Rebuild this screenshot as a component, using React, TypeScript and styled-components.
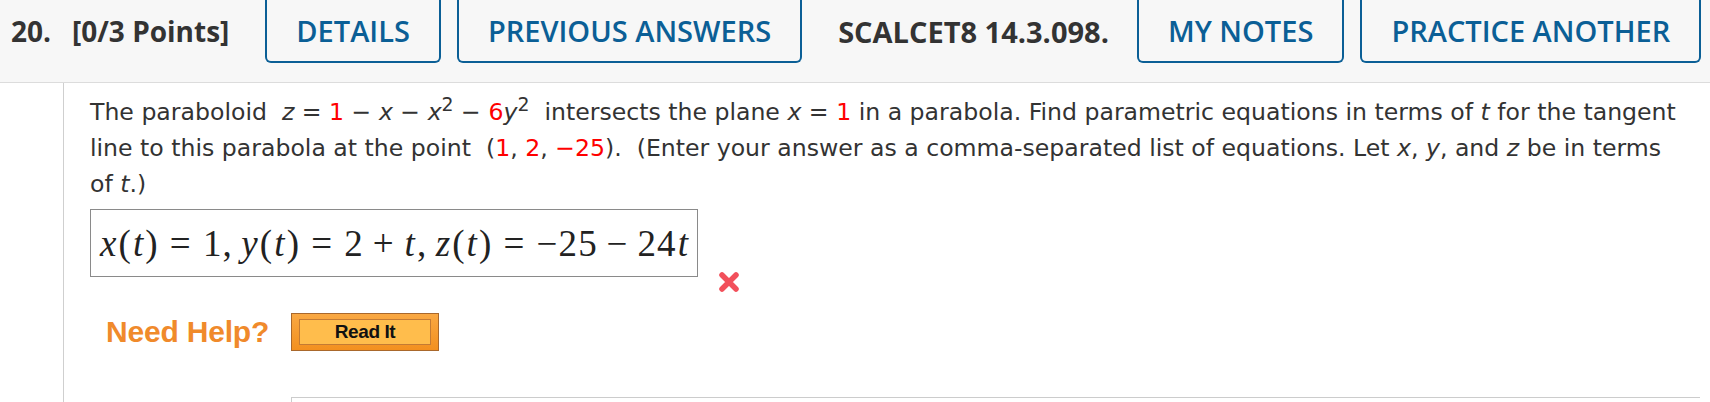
import React from 'react'
import styled, { createGlobalStyle } from 'styled-components'

const GlobalStyle = createGlobalStyle`
    html, body {
        margin: 0;
        padding: 0;
        background: #ffffff;
    }
    body {
        font-family: "Open Sans", "DejaVu Sans", sans-serif;
    }
`

const App: React.FC = () => {
    return (
        <StyledPage>
            <GlobalStyle />
            <StyledHeader>
                <StyledNumber>20.</StyledNumber>
                <StyledPoints>[0/3 Points]</StyledPoints>
                <StyledActions>
                    <StyledTabButton>DETAILS</StyledTabButton>
                    <StyledTabButton>PREVIOUS ANSWERS</StyledTabButton>
                    <StyledLabel>SCALCET8 14.3.098.</StyledLabel>
                    <StyledTabButton>MY NOTES</StyledTabButton>
                    <StyledTabButton>PRACTICE ANOTHER</StyledTabButton>
                </StyledActions>
            </StyledHeader>
            <StyledBody>
                <StyledPrompt>
                    The paraboloid&nbsp; <StyledVar>z</StyledVar> = <StyledRed>1</StyledRed> − <StyledVar>x</StyledVar> − <StyledVar>x</StyledVar><StyledSup>2</StyledSup> − <StyledRed>6</StyledRed><StyledVar>y</StyledVar><StyledSup>2</StyledSup>&nbsp; intersects the plane <StyledVar>x</StyledVar> = <StyledRed>1</StyledRed> in a parabola. Find parametric equations in terms of <StyledVar>t</StyledVar> for the tangent<br />
                    line to this parabola at the point&nbsp; (<StyledRed>1</StyledRed>, <StyledRed>2</StyledRed>, <StyledRed>−25</StyledRed>).&nbsp; (Enter your answer as a comma-separated list of equations. Let <StyledVar>x</StyledVar>, <StyledVar>y</StyledVar>, and <StyledVar>z</StyledVar> be in terms<br />
                    of <StyledVar>t</StyledVar>.)
                </StyledPrompt>
                <StyledAnswerRow>
                    <StyledAnswerBox>
                        <StyledMath>
                            <StyledMathVar>x</StyledMathVar>(<StyledMathVar>t</StyledMathVar>)
                            <StyledRel>=</StyledRel>1<StyledPunct>,</StyledPunct>
                            <StyledMathVar>y</StyledMathVar>(<StyledMathVar>t</StyledMathVar>)
                            <StyledRel>=</StyledRel>2<StyledBin>+</StyledBin><StyledMathVar>t</StyledMathVar><StyledPunct>,</StyledPunct>
                            <StyledMathVar>z</StyledMathVar>(<StyledMathVar>t</StyledMathVar>)
                            <StyledRel>=</StyledRel>−25<StyledBin>−</StyledBin>24<StyledMathVar>t</StyledMathVar>
                        </StyledMath>
                    </StyledAnswerBox>
                    <StyledWrongMark viewBox="0 0 24 24" aria-hidden="true">
                        <path d="M5 5 L19 19 M19 5 L5 19" stroke="#f2505b" strokeWidth="5.5" strokeLinecap="round" />
                    </StyledWrongMark>
                </StyledAnswerRow>
                <StyledHelpRow>
                    <StyledHelpLabel>Need Help?</StyledHelpLabel>
                    <StyledReadIt>
                        <StyledReadItInner>Read It</StyledReadItInner>
                    </StyledReadIt>
                </StyledHelpRow>
                <StyledNextPanel />
            </StyledBody>
        </StyledPage>
    )
}

const StyledPage = styled.div`
    width: 1710px;
    height: 402px;
    overflow: hidden;
`

const StyledHeader = styled.div`
    display: flex;
    align-items: flex-start;
    height: 82px;
    background: #f7f7f7;
    border-bottom: 1px solid #dcdcdc;
    white-space: nowrap;
`

const StyledNumber = styled.span`
    flex-shrink: 0;
    margin-left: 11px;
    line-height: 63px;
    font-size: 28px;
    font-weight: 700;
    color: #333333;
`

const StyledPoints = styled.span`
    flex-shrink: 0;
    margin-left: 21px;
    line-height: 63px;
    font-size: 28px;
    font-weight: 700;
    color: #333333;
`

const StyledActions = styled.div`
    display: flex;
    flex-shrink: 0;
    gap: 16px;
    margin-left: 36px;
`

const StyledTabButton = styled.div`
    box-sizing: border-box;
    display: flex;
    flex-shrink: 0;
    align-items: center;
    height: 63px;
    padding: 0 29px;
    border: 2px solid #0b5f96;
    border-top: none;
    border-radius: 0 0 6px 6px;
    font-size: 29px;
    font-weight: 600;
    color: #0b5f96;
`

const StyledLabel = styled.div`
    display: flex;
    flex-shrink: 0;
    align-items: center;
    height: 63px;
    padding: 0 12px 0 20px;
    font-size: 29px;
    font-weight: 700;
    color: #333333;
`

const StyledBody = styled.div`
    margin-left: 63px;
    border-left: 1px solid #cfcfcf;
    padding: 11px 10px 0 26px;
    height: 319px;
`

const StyledPrompt = styled.p`
    margin: 0;
    font-family: "DejaVu Sans", Verdana, sans-serif;
    font-size: 23.6px;
    line-height: 36px;
    color: #333333;
`

const StyledVar = styled.i``

const StyledRed = styled.span`
    color: #ff0000;
`

const StyledSup = styled.sup`
    font-size: 0.8em;
    line-height: 0;
`

const StyledAnswerRow = styled.div`
    display: flex;
    align-items: flex-start;
    height: 68px;
    margin-top: 7px;
`

const StyledAnswerBox = styled.div`
    box-sizing: border-box;
    display: flex;
    align-items: center;
    width: 608px;
    height: 68px;
    padding: 0 8px;
    border: 1px solid #8a8a8a;
`

const StyledMath = styled.span`
    font-family: "Liberation Serif", "DejaVu Serif", serif;
    font-size: 37px;
    color: #222222;
    letter-spacing: 1.1px;
    white-space: nowrap;
`

const StyledMathVar = styled.i`
    margin: 0 1px;
`

const StyledRel = styled.span`
    margin: 0 0.3em;
`

const StyledBin = styled.span`
    margin: 0 0.24em;
`

const StyledPunct = styled.span`
    margin-right: 0.2em;
`

const StyledWrongMark = styled.svg`
    flex-shrink: 0;
    width: 24px;
    height: 24px;
    margin: 61px 0 0 19px;
    filter: blur(0.4px);
`

const StyledHelpRow = styled.div`
    display: flex;
    align-items: center;
    margin-top: 36px;
`

const StyledHelpLabel = styled.span`
    margin-left: 16px;
    font-family: "Liberation Sans", Arial, sans-serif;
    font-size: 30px;
    font-weight: 700;
    color: #f08a2b;
    letter-spacing: -0.2px;
`

const StyledReadIt = styled.div`
    box-sizing: border-box;
    width: 148px;
    height: 38px;
    margin-left: 22px;
    padding: 5px 7px;
    border: 1px solid #a9682c;
    background: linear-gradient(#f9a843, #f3901f);
`

const StyledReadItInner = styled.div`
    box-sizing: border-box;
    display: flex;
    align-items: center;
    justify-content: center;
    height: 100%;
    border: 1px solid #c47b33;
    background: #ffbd4c;
    font-family: "Liberation Sans", Arial, sans-serif;
    font-size: 19px;
    font-weight: 700;
    color: #111111;
    letter-spacing: -0.4px;
`

const StyledNextPanel = styled.div`
    margin: 46px 0 0 201px;
    height: 20px;
    border-top: 1px solid #cccccc;
    border-left: 1px solid #cccccc;
`

export default App
